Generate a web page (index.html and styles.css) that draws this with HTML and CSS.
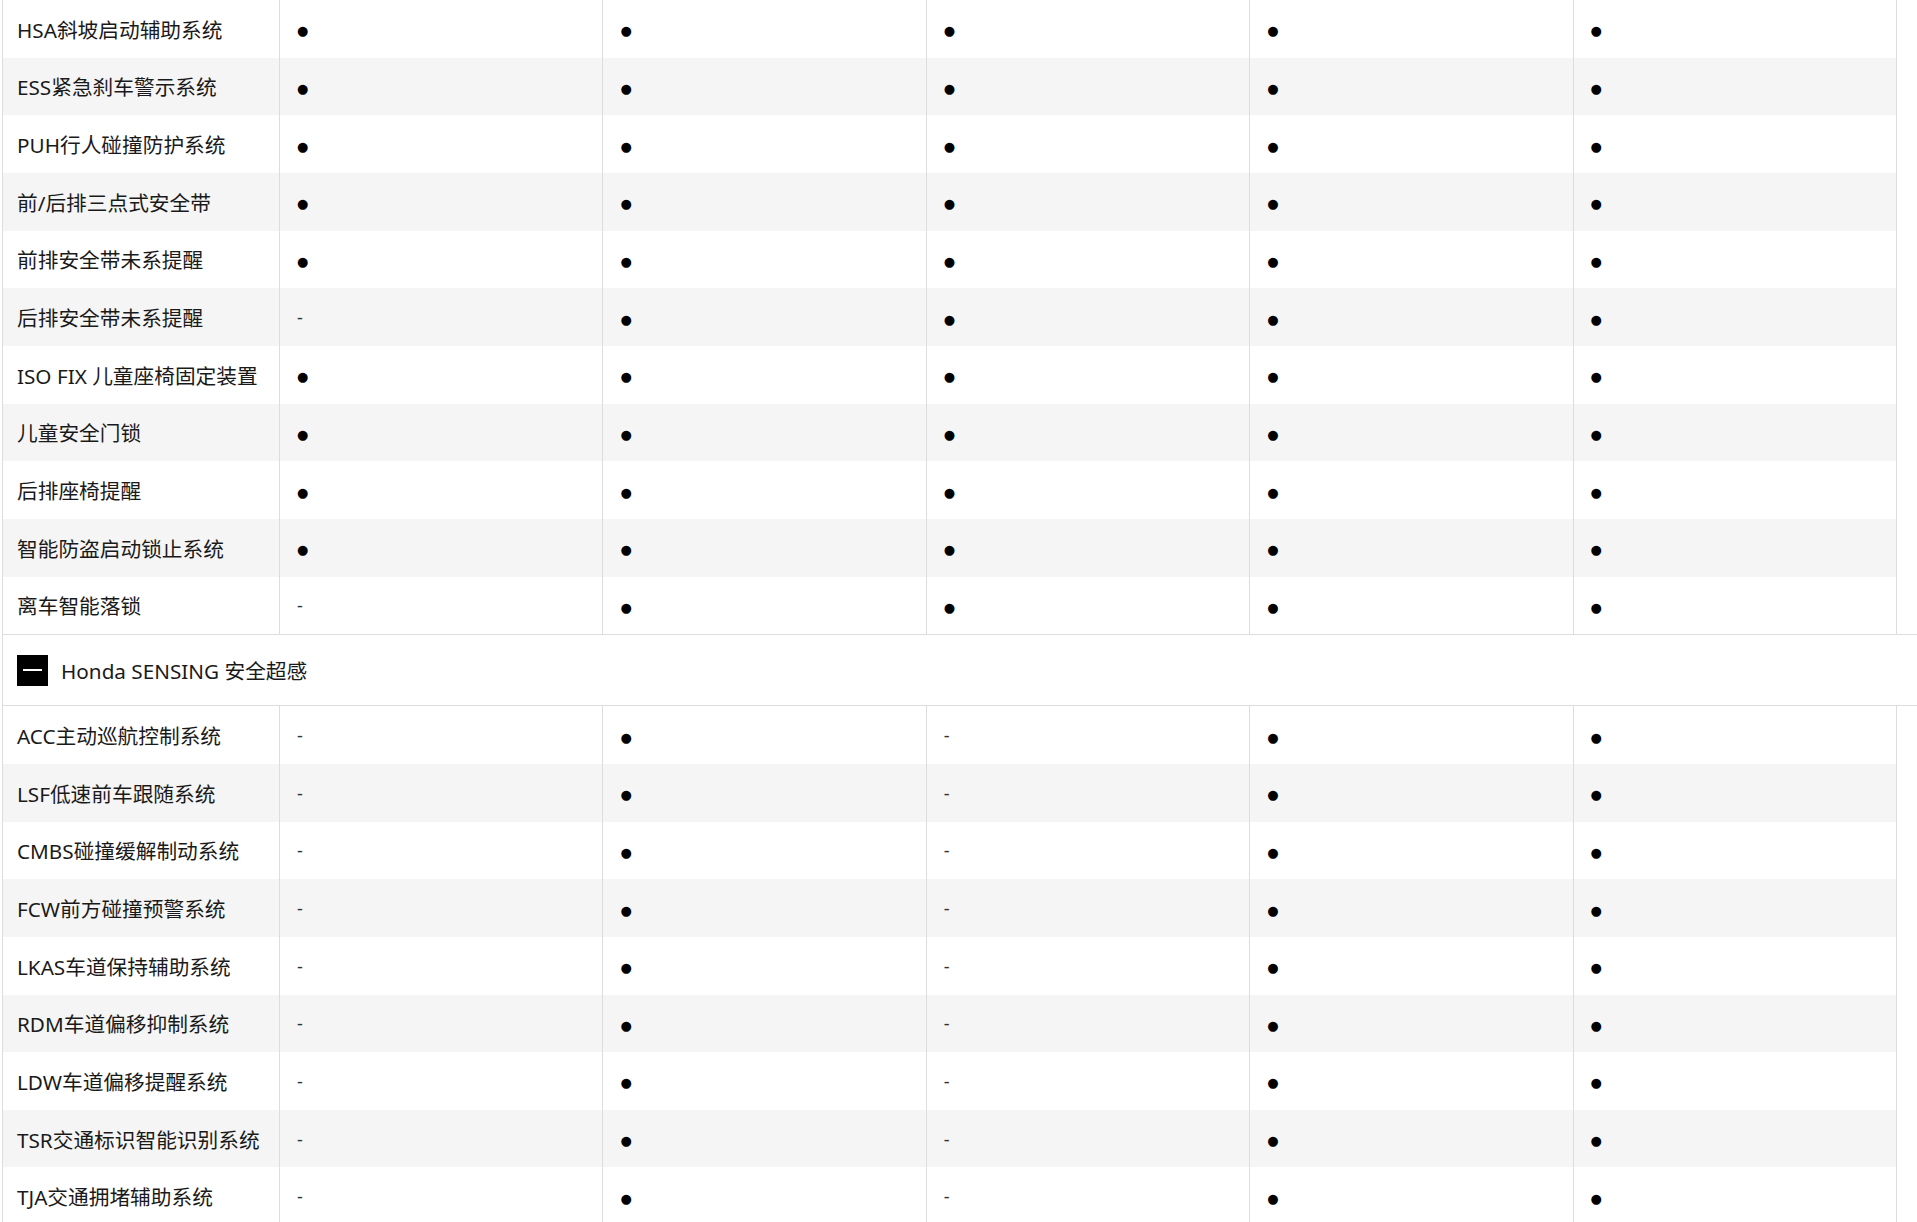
FILE: index.html
```html
<!DOCTYPE html>
<html lang="zh-CN">
<head>
<meta charset="utf-8">
<title>配置表</title>
<link rel="stylesheet" href="styles.css">
</head>
<body>
<div class="spec">
  <div class="row"><div class="name">HSA斜坡启动辅助系统</div><div class="cell"><span class="dot">●</span></div><div class="cell"><span class="dot">●</span></div><div class="cell"><span class="dot">●</span></div><div class="cell"><span class="dot">●</span></div><div class="cell"><span class="dot">●</span></div></div>
  <div class="row alt"><div class="name">ESS紧急刹车警示系统</div><div class="cell"><span class="dot">●</span></div><div class="cell"><span class="dot">●</span></div><div class="cell"><span class="dot">●</span></div><div class="cell"><span class="dot">●</span></div><div class="cell"><span class="dot">●</span></div></div>
  <div class="row"><div class="name">PUH行人碰撞防护系统</div><div class="cell"><span class="dot">●</span></div><div class="cell"><span class="dot">●</span></div><div class="cell"><span class="dot">●</span></div><div class="cell"><span class="dot">●</span></div><div class="cell"><span class="dot">●</span></div></div>
  <div class="row alt"><div class="name">前/后排三点式安全带</div><div class="cell"><span class="dot">●</span></div><div class="cell"><span class="dot">●</span></div><div class="cell"><span class="dot">●</span></div><div class="cell"><span class="dot">●</span></div><div class="cell"><span class="dot">●</span></div></div>
  <div class="row"><div class="name">前排安全带未系提醒</div><div class="cell"><span class="dot">●</span></div><div class="cell"><span class="dot">●</span></div><div class="cell"><span class="dot">●</span></div><div class="cell"><span class="dot">●</span></div><div class="cell"><span class="dot">●</span></div></div>
  <div class="row alt"><div class="name">后排安全带未系提醒</div><div class="cell"><span class="dash">-</span></div><div class="cell"><span class="dot">●</span></div><div class="cell"><span class="dot">●</span></div><div class="cell"><span class="dot">●</span></div><div class="cell"><span class="dot">●</span></div></div>
  <div class="row"><div class="name">ISO FIX 儿童座椅固定装置</div><div class="cell"><span class="dot">●</span></div><div class="cell"><span class="dot">●</span></div><div class="cell"><span class="dot">●</span></div><div class="cell"><span class="dot">●</span></div><div class="cell"><span class="dot">●</span></div></div>
  <div class="row alt"><div class="name">儿童安全门锁</div><div class="cell"><span class="dot">●</span></div><div class="cell"><span class="dot">●</span></div><div class="cell"><span class="dot">●</span></div><div class="cell"><span class="dot">●</span></div><div class="cell"><span class="dot">●</span></div></div>
  <div class="row"><div class="name">后排座椅提醒</div><div class="cell"><span class="dot">●</span></div><div class="cell"><span class="dot">●</span></div><div class="cell"><span class="dot">●</span></div><div class="cell"><span class="dot">●</span></div><div class="cell"><span class="dot">●</span></div></div>
  <div class="row alt"><div class="name">智能防盗启动锁止系统</div><div class="cell"><span class="dot">●</span></div><div class="cell"><span class="dot">●</span></div><div class="cell"><span class="dot">●</span></div><div class="cell"><span class="dot">●</span></div><div class="cell"><span class="dot">●</span></div></div>
  <div class="row"><div class="name">离车智能落锁</div><div class="cell"><span class="dash">-</span></div><div class="cell"><span class="dot">●</span></div><div class="cell"><span class="dot">●</span></div><div class="cell"><span class="dot">●</span></div><div class="cell"><span class="dot">●</span></div></div>

  <div class="section">
    <span class="toggle"><span class="minus"></span></span>
    <span class="section-title">Honda SENSING 安全超感</span>
  </div>

  <div class="row"><div class="name">ACC主动巡航控制系统</div><div class="cell"><span class="dash">-</span></div><div class="cell"><span class="dot">●</span></div><div class="cell"><span class="dash">-</span></div><div class="cell"><span class="dot">●</span></div><div class="cell"><span class="dot">●</span></div></div>
  <div class="row alt"><div class="name">LSF低速前车跟随系统</div><div class="cell"><span class="dash">-</span></div><div class="cell"><span class="dot">●</span></div><div class="cell"><span class="dash">-</span></div><div class="cell"><span class="dot">●</span></div><div class="cell"><span class="dot">●</span></div></div>
  <div class="row"><div class="name">CMBS碰撞缓解制动系统</div><div class="cell"><span class="dash">-</span></div><div class="cell"><span class="dot">●</span></div><div class="cell"><span class="dash">-</span></div><div class="cell"><span class="dot">●</span></div><div class="cell"><span class="dot">●</span></div></div>
  <div class="row alt"><div class="name">FCW前方碰撞预警系统</div><div class="cell"><span class="dash">-</span></div><div class="cell"><span class="dot">●</span></div><div class="cell"><span class="dash">-</span></div><div class="cell"><span class="dot">●</span></div><div class="cell"><span class="dot">●</span></div></div>
  <div class="row"><div class="name">LKAS车道保持辅助系统</div><div class="cell"><span class="dash">-</span></div><div class="cell"><span class="dot">●</span></div><div class="cell"><span class="dash">-</span></div><div class="cell"><span class="dot">●</span></div><div class="cell"><span class="dot">●</span></div></div>
  <div class="row alt"><div class="name">RDM车道偏移抑制系统</div><div class="cell"><span class="dash">-</span></div><div class="cell"><span class="dot">●</span></div><div class="cell"><span class="dash">-</span></div><div class="cell"><span class="dot">●</span></div><div class="cell"><span class="dot">●</span></div></div>
  <div class="row"><div class="name">LDW车道偏移提醒系统</div><div class="cell"><span class="dash">-</span></div><div class="cell"><span class="dot">●</span></div><div class="cell"><span class="dash">-</span></div><div class="cell"><span class="dot">●</span></div><div class="cell"><span class="dot">●</span></div></div>
  <div class="row alt"><div class="name">TSR交通标识智能识别系统</div><div class="cell"><span class="dash">-</span></div><div class="cell"><span class="dot">●</span></div><div class="cell"><span class="dash">-</span></div><div class="cell"><span class="dot">●</span></div><div class="cell"><span class="dot">●</span></div></div>
  <div class="row"><div class="name">TJA交通拥堵辅助系统</div><div class="cell"><span class="dash">-</span></div><div class="cell"><span class="dot">●</span></div><div class="cell"><span class="dash">-</span></div><div class="cell"><span class="dot">●</span></div><div class="cell"><span class="dot">●</span></div></div>
</div>
</body>
</html>
```

FILE: styles.css
```css
html {
  overflow: hidden;
}
body {
  margin: 0;
  background: #ffffff;
  font-family: "Noto Sans", "Noto Sans CJK SC", sans-serif;
  font-size: 20.7px;
  color: #1a1a1a;
}
.spec {
  margin-left: 2px;
  border-left: 1px solid #dddddd;
}
.row {
  display: grid;
  grid-template-columns: 277px repeat(5, 1fr);
  height: 57.67px;
  margin-right: 20px;
  background: #ffffff;
}
.row.alt {
  background: #f5f5f5;
}
.name,
.cell {
  display: flex;
  align-items: center;
  border-right: 1px solid #dddddd;
  white-space: nowrap;
}
.name {
  padding-left: 14px;
}
.cell {
  padding-left: 17px;
}
.dot {
  font-family: "DejaVu Sans", sans-serif;
  font-size: 13px;
  color: #000000;
  position: relative;
  top: 2px;
}
.dash {
  font-size: 18px;
  color: #333333;
}
.section {
  display: flex;
  align-items: center;
  gap: 13px;
  height: 70px;
  padding-left: 14px;
  border-top: 1px solid #dddddd;
  border-bottom: 1px solid #dddddd;
}
.toggle {
  width: 31px;
  height: 31px;
  background: #000000;
  display: flex;
  align-items: center;
  justify-content: center;
}
.minus {
  width: 19px;
  height: 2px;
  background: #ffffff;
}
.section-title {
  color: #1a1a1a;
}
```
